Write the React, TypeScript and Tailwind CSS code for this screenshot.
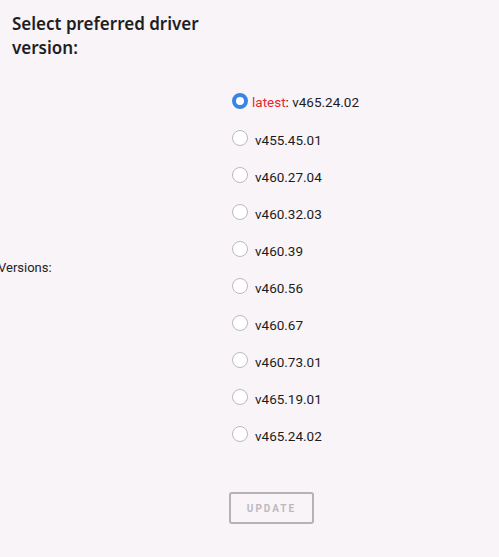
import { useState } from "react";

const versions = [
  "v465.24.02",
  "v455.45.01",
  "v460.27.04",
  "v460.32.03",
  "v460.39",
  "v460.56",
  "v460.67",
  "v460.73.01",
  "v465.19.01",
  "v465.24.02",
];

const DriverVersionForm = () => {
  const [selected, setSelected] = useState(0);

  return (
    <div className="min-h-[557px] w-full bg-[#f8f4f8] font-['Roboto',sans-serif] text-[#1c1c1c]">
      <h2 className="w-[240px] pl-3 pt-[12px] font-['Noto_Sans',sans-serif] text-[17px] font-semibold leading-[24px] text-[#1e1e1e]">
        Select preferred driver version:
      </h2>

      <div className="mt-[22px] flex">
        <div className="flex w-[232px] items-center">
          <span className="-ml-[2px] pt-[2px] text-[13px] text-[#222]">Versions:</span>
        </div>
        <ul className="flex flex-col">
          {versions.map((v, i) => (
            <li key={i} className="flex h-[37px] items-center">
              <button
                type="button"
                onClick={() => setSelected(i)}
                className={`h-4 w-4 shrink-0 rounded-full bg-white ${
                  selected === i ? "border-[4px] border-[#3b84e6]" : "border border-[#bdb8bd]"
                }`}
              />
              <span className={`text-[13.5px] ${i === 0 ? "ml-[4px] mt-[4px]" : "ml-[7px] mt-[6px]"}`}>
                {i === 0 && <span className="text-[#e8262b]">latest</span>}
                {i === 0 ? `: ${v}` : v}
              </span>
            </li>
          ))}
        </ul>
      </div>

      <div className="mt-[40px] pl-[229px]">
        <button
          type="button"
          disabled
          className="h-[32px] w-[85px] rounded-[3px] border-2 border-[#b5b1b5] text-[10px] font-bold tracking-[2px] text-[#bdb9bd]"
        >
          UPDATE
        </button>
      </div>
    </div>
  );
};

export default DriverVersionForm;
